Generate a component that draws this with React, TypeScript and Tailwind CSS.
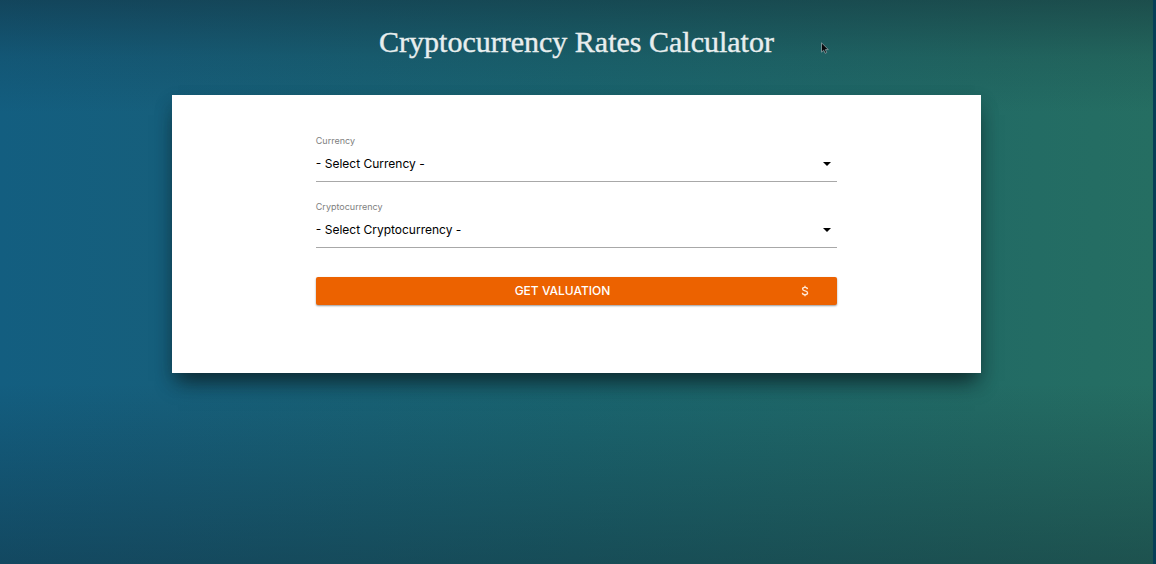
import { useState } from "react";

type SelectFieldProps = {
  id: string;
  label: string;
  placeholder: string;
  options: string[];
};

function SelectField({ id, label, placeholder, options }: SelectFieldProps) {
  const [value, setValue] = useState("");
  return (
    <div className="flex flex-col">
      <label htmlFor={id} className="text-[9px] leading-3 text-[#808080]">
        {label}
      </label>
      <div className="relative">
        <select
          id={id}
          value={value}
          onChange={(event) => setValue(event.target.value)}
          className="block h-[35px] w-full appearance-none border-b border-[#a8a8a8] bg-transparent pb-0 text-[12px] text-black outline-none"
        >
          <option value="">{placeholder}</option>
          {options.map((option) => (
            <option key={option}>{option}</option>
          ))}
        </select>
        <svg
          aria-hidden="true"
          viewBox="0 0 8 4"
          className="pointer-events-none absolute top-[15px] right-[6px] h-1 w-2"
        >
          <path d="M0 0h8L4 4z" fill="#000" />
        </svg>
      </div>
    </div>
  );
}

export default function App() {
  return (
    <div className="min-h-screen border-r-3 border-[#063f57] bg-[linear-gradient(to_bottom,rgba(18,40,50,0.46)_0%,rgba(18,40,50,0.14)_10%,transparent_20%,transparent_68%,rgba(18,40,50,0.4)_100%),linear-gradient(to_right,#135e80_0%,#165f7c_14%,#1a6570_50%,#226b65_85%,#256e62_100%)] font-['Inter','Liberation_Sans',sans-serif]">
      <header className="pt-6 text-center">
        <h1 className="font-['Liberation_Serif',serif] text-[30px] leading-9 text-[#e8eeee] [-webkit-text-stroke:0.4px_#e8eeee]">
          Cryptocurrency Rates Calculator
        </h1>
      </header>
      <svg
        aria-hidden="true"
        viewBox="0 0 8 12"
        className="pointer-events-none absolute top-[42px] left-[821px] h-3 w-2"
      >
        <path
          d="M.5.8v9.4l2.2-2 1.4 3.1 1.6-.7-1.3-3h3z"
          fill="#08090c"
          stroke="#8fa5a8"
          strokeWidth=".8"
        />
      </svg>
      <main className="mx-auto mt-[35px] w-[70.2%] bg-white px-36 pt-10 pb-[68px] shadow-[0_14px_20px_-6px_rgba(10,25,30,0.7),0_8px_16px_rgba(10,30,35,0.25)]">
        <form onSubmit={(event) => event.preventDefault()}>
          <div className="flex flex-col gap-[19px]">
            <SelectField
              id="currency"
              label="Currency"
              placeholder="- Select Currency -"
              options={["USD", "EUR", "GBP"]}
            />
            <SelectField
              id="cryptocurrency"
              label="Cryptocurrency"
              placeholder="- Select Cryptocurrency -"
              options={["Bitcoin", "Ethereum", "Litecoin"]}
            />
          </div>
          <button
            type="submit"
            className="mt-[29px] flex h-7 w-full items-center rounded-xs bg-[#ec6200] pr-7 pl-2 text-[12px] font-medium text-white shadow-[0_1px_2px_rgba(0,0,0,0.4)]"
          >
            <span className="grow text-center">GET VALUATION</span>
            <svg aria-hidden="true" viewBox="0 0 8 14" className="h-3 w-2">
              <path
                d="M4 .8v2M4 11.2v2M6.8 4.8C6.7 3.5 5.6 2.7 4 2.7S1.2 3.5 1.2 4.7C1.2 7.6 7 6.2 7 9.2c0 1.3-1.2 2.1-3 2.1S1 10.5 1 9.1"
                fill="none"
                stroke="#ffe9d6"
                strokeWidth="1.6"
              />
            </svg>
          </button>
        </form>
      </main>
    </div>
  );
}
